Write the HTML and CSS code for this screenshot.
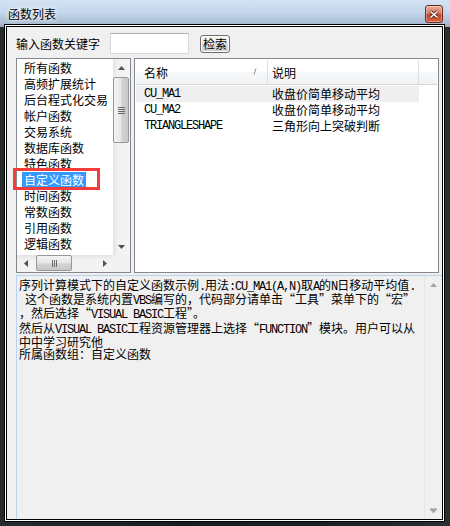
FILE: index.html
```html
<!DOCTYPE html>
<html>
<head>
    <meta charset="utf-8">
    <link rel="stylesheet" href="styles.css">
</head>
<body>
    <div class="window">
        <div class="titlebar">
            <span class="title">函数列表</span>
            <div class="close-btn">
                <svg width="10" height="9" viewBox="0 0 10 9">
                    <path d="M1.5 1.5l7 6M8.5 1.5l-7 6" stroke="#5b2418" stroke-width="3.2" fill="none"/>
                    <path d="M1.5 1.5l7 6M8.5 1.5l-7 6" stroke="#fff" stroke-width="1.6" fill="none"/>
                </svg>
            </div>
        </div>
        <div class="client">
            <div class="search-row">
                <label for="fn-key">输入函数关键字</label>
                <input id="fn-key" class="key-input" type="text">
                <button type="button" class="btn">检索</button>
            </div>
            <div class="panes">
                <div class="catlist">
                    <ul class="cat-items">
                        <li><span>所有函数</span></li>
                        <li><span>高频扩展统计</span></li>
                        <li><span>后台程式化交易</span></li>
                        <li><span>帐户函数</span></li>
                        <li><span>交易系统</span></li>
                        <li><span>数据库函数</span></li>
                        <li><span>特色函数</span></li>
                        <li class="selected"><span>自定义函数</span></li>
                        <li><span>时间函数</span></li>
                        <li><span>常数函数</span></li>
                        <li><span>引用函数</span></li>
                        <li><span>逻辑函数</span></li>
                    </ul>
                    <div class="vscroll">
                        <div class="sb-btn"><svg width="7" height="4"><path d="M0 4h7L3.5 0z" fill="#505050"/></svg></div>
                        <div class="sb-track">
                            <div class="thumb-v"><i></i><i></i><i></i><i></i></div>
                        </div>
                        <div class="sb-btn"><svg width="7" height="4"><path d="M0 0h7L3.5 4z" fill="#505050"/></svg></div>
                    </div>
                    <div class="hscroll">
                        <div class="sb-btn"><svg width="4" height="7"><path d="M4 0v7L0 3.5z" fill="#505050"/></svg></div>
                        <div class="sb-track">
                            <div class="thumb-h"><i></i><i></i><i></i></div>
                        </div>
                        <div class="sb-btn"><svg width="4" height="7"><path d="M0 0v7L4 3.5z" fill="#505050"/></svg></div>
                    </div>
                    <div class="corner"></div>
                    <div class="mark"></div>
                </div>
                <div class="funclist">
                    <div class="lv-head">
                        <div class="lv-col c1">名称<svg class="sort" width="4" height="7"><path d="M3 0.5L1 6.5" stroke="#8a8a8a" fill="none"/></svg></div>
                        <div class="lv-col c2">说明</div>
                        <div class="lv-col c3"></div>
                    </div>
                    <div class="lv-row hot">
                        <div class="c1 code">CU_MA1</div>
                        <div class="c2">收盘价简单移动平均</div>
                    </div>
                    <div class="lv-row">
                        <div class="c1 code">CU_MA2</div>
                        <div class="c2">收盘价简单移动平均</div>
                    </div>
                    <div class="lv-row">
                        <div class="c1 code">TRIANGLESHAPE</div>
                        <div class="c2">三角形向上突破判断</div>
                    </div>
                </div>
            </div>
            <div class="desc">
                <div class="desc-text">序列计算模式下的自定义函数示例<span class="a">.</span>用法<span class="a">:CU_MA1(A,N)</span>取<span class="a">A</span>的<span class="a">N</span>日移动平均值<span class="a">.</span>
<span class="a"> </span>这个函数是系统内置<span class="a">VBS</span>编写的，代码部分请单击“工具”菜单下的“宏”
，然后选择“<span class="a">VISUAL BASIC</span>工程”。
然后从<span class="a">VISUAL BASIC</span>工程资源管理器上选择“<span class="a">FUNCTION</span>”模块。用户可以从
中中学习研究他
所属函数组：自定义函数</div>
                <div class="vscroll light">
                    <div class="sb-btn"><svg width="7" height="4"><path d="M0 4h7L3.5 0z" fill="#a6a6a6"/></svg></div>
                    <div class="sb-track"></div>
                    <div class="sb-btn"><svg width="7" height="5"><path d="M0 0h7M0 1h7L3.5 5z" stroke="#a6a6a6" stroke-width="0.8" fill="#a6a6a6"/></svg></div>
                </div>
            </div>
        </div>
    </div>
</body>
</html>
```

FILE: styles.css
```css
/* dialog: function list */

body {
    margin: 0;
    background: #1e2224;
    font-family: "Noto Sans CJK SC", sans-serif;
    font-size: 12px;
    color: #000;
}

.window {
    width: 450px;
    height: 526px;
    box-sizing: border-box;
    display: flex;
    flex-direction: column;
    padding: 0 8px 7px 7px;
    background: linear-gradient(to right, #262b2c, #1a1d1f 40%, #1c1f21 70%, #2a302f);
}

/* title bar */

.titlebar {
    flex: none;
    height: 27px;
    margin: 0 -8px 0 -7px;
    padding: 0 7px 0 8px;
    display: flex;
    align-items: flex-start;
    background: linear-gradient(#d4e3f3, #c4d7ec 45%, #aabdd3 85%, #98a9bd);
}

.title {
    margin-top: 6px;
    line-height: 16px;
    text-shadow: 0 0 6px #fff, 0 0 3px #fff;
}

.close-btn {
    margin: 5px 0 0 auto;
    width: 18px;
    height: 18px;
    box-sizing: border-box;
    border: 1px solid #6a2a1c;
    border-radius: 3px;
    background: linear-gradient(#eab0a0, #d8785f 45%, #c4432a 55%, #d7613f);
    box-shadow: inset 0 0 0 1px rgba(255, 255, 255, 0.35);
    display: flex;
    align-items: center;
    justify-content: center;
}

/* client area */

.client {
    flex: 1;
    display: flex;
    flex-direction: column;
    background: #f0f0f0;
    box-shadow: 0 0 0 1px #000, 0 0 0 2px #fff, 0 0 0 3px #000;
}

.search-row {
    flex: none;
    height: 31px;
    box-sizing: border-box;
    padding: 2px 0 0 9px;
    display: flex;
    align-items: center;
}

.key-input {
    margin: 0 0 0 10px;
    width: 79px;
    height: 21px;
    box-sizing: border-box;
    border: 1px solid #d6d9df;
    border-top-color: #abadb3;
    background: #fff;
    padding: 0;
}

.btn {
    margin-left: 11px;
    width: 30px;
    height: 18px;
    padding: 0;
    box-sizing: border-box;
    border: 1px solid #6f6f6f;
    border-radius: 3px;
    background: linear-gradient(#f3f3f3, #ececec 48%, #dedede 52%, #d2d2d2);
    box-shadow: inset 0 0 0 1px #fcfcfc;
    font-family: "Noto Sans CJK SC", sans-serif;
    font-size: 12px;
    line-height: 15px;
    color: #000;
}

.panes {
    flex: none;
    height: 215px;
    padding-left: 9px;
    display: flex;
    gap: 3px;
}

/* category list box */

.catlist {
    position: relative;
    width: 115px;
    box-sizing: border-box;
    border: 1px solid #828790;
    background: #fff;
    display: grid;
    grid-template-columns: 1fr 17px;
    grid-template-rows: 1fr 17px;
}

.cat-items {
    margin: 0;
    padding: 1px 0 0 0;
    list-style: none;
    overflow: hidden;
}

.cat-items li {
    height: 16px;
    line-height: 16px;
    white-space: nowrap;
}

.cat-items span {
    display: inline-block;
    margin-left: 5px;
    padding: 0 2px;
}

.cat-items .selected span {
    background: #3399ff;
    color: #fff;
}

/* annotation frame drawn over the list */
.mark {
    position: absolute;
    left: -4px;
    top: 109px;
    width: 87px;
    height: 22px;
    box-sizing: border-box;
    border: 3px solid #f23c3c;
}

/* scroll bars */

.vscroll {
    display: flex;
    flex-direction: column;
    background: linear-gradient(to right, #e4e4e4, #f2f2f2 30%, #f4f4f4);
}

.hscroll {
    display: flex;
    background: linear-gradient(#e4e4e4, #f2f2f2 30%, #f4f4f4);
}

.sb-btn {
    flex: none;
    width: 17px;
    height: 17px;
    display: flex;
    align-items: center;
    justify-content: center;
}

.sb-btn svg {
    display: block;
}

.sb-track {
    flex: 1;
    position: relative;
}

.thumb-v {
    margin: 1px 1px 0 0;
    height: 66px;
    box-sizing: border-box;
    border: 1px solid #979797;
    border-radius: 2px;
    background: linear-gradient(to right, #f4f4f4, #e7e7e7 50%, #d4d4d4 55%, #c8c8c8);
    display: flex;
    flex-direction: column;
    align-items: center;
    justify-content: center;
    gap: 1px;
}

.thumb-v i {
    display: block;
    width: 7px;
    height: 1px;
    background: #6a6a6a;
}

.thumb-h {
    margin: 0 0 0 2px;
    width: 36px;
    height: 16px;
    box-sizing: border-box;
    border: 1px solid #979797;
    border-radius: 2px;
    background: linear-gradient(#f4f4f4, #e7e7e7 50%, #d4d4d4 55%, #c8c8c8);
    display: flex;
    align-items: center;
    justify-content: center;
    gap: 1px;
}

.thumb-h i {
    display: block;
    width: 1px;
    height: 7px;
    background: #6a6a6a;
}

.corner {
    background: #f0f0f0;
}

/* function list view */

.funclist {
    width: 305px;
    box-sizing: border-box;
    border: 1px solid #828790;
    padding: 1px;
    background: #fff;
}

.lv-head {
    display: flex;
    height: 24px;
    border-bottom: 1px solid #d5d5d5;
    background: linear-gradient(#ffffff, #ffffff 50%, #f7f8fa 50%, #f1f2f4);
}

.lv-col {
    display: flex;
    align-items: center;
    box-sizing: border-box;
    border-right: 1px solid #dedfe2;
}

.lv-col.c1 {
    width: 132px;
    padding-left: 8px;
}

.lv-col.c2 {
    width: 151px;
    padding-left: 4px;
}

.lv-col.c3 {
    flex: 1;
    border-right: none;
}

.sort {
    margin: -2px 10px 0 auto;
}

.lv-row {
    display: flex;
    width: 283px;
    height: 16px;
    line-height: 16px;
    white-space: nowrap;
}

.lv-row.hot {
    margin-top: 1px;
    background: #efefef;
}

.lv-row .c1 {
    width: 132px;
    padding-left: 8px;
    box-sizing: border-box;
}

.lv-row .c2 {
    padding-left: 4px;
}

.code {
    font-family: "Liberation Mono", monospace;
    font-size: 12px;
    letter-spacing: -1.2px;
}

/* description box */

.desc {
    flex: 1;
    margin: 2px 0 0 9px;
    display: flex;
    border-top: 1px solid #b9d2ee;
    border-left: 1px solid #b9d2ee;
    min-height: 0;
}

.desc-text {
    flex: 1;
    padding: 3px 0 0 2px;
    white-space: pre;
    line-height: 12.2px;
    overflow: hidden;
}

.desc-text .a {
    font-family: "Liberation Mono", monospace;
    font-size: 12px;
    letter-spacing: -1.2px;
}

.vscroll.light {
    width: 17px;
    flex: none;
    border-left: 1px solid #e6e6e6;
    background: #f0f0f0;
}
```
